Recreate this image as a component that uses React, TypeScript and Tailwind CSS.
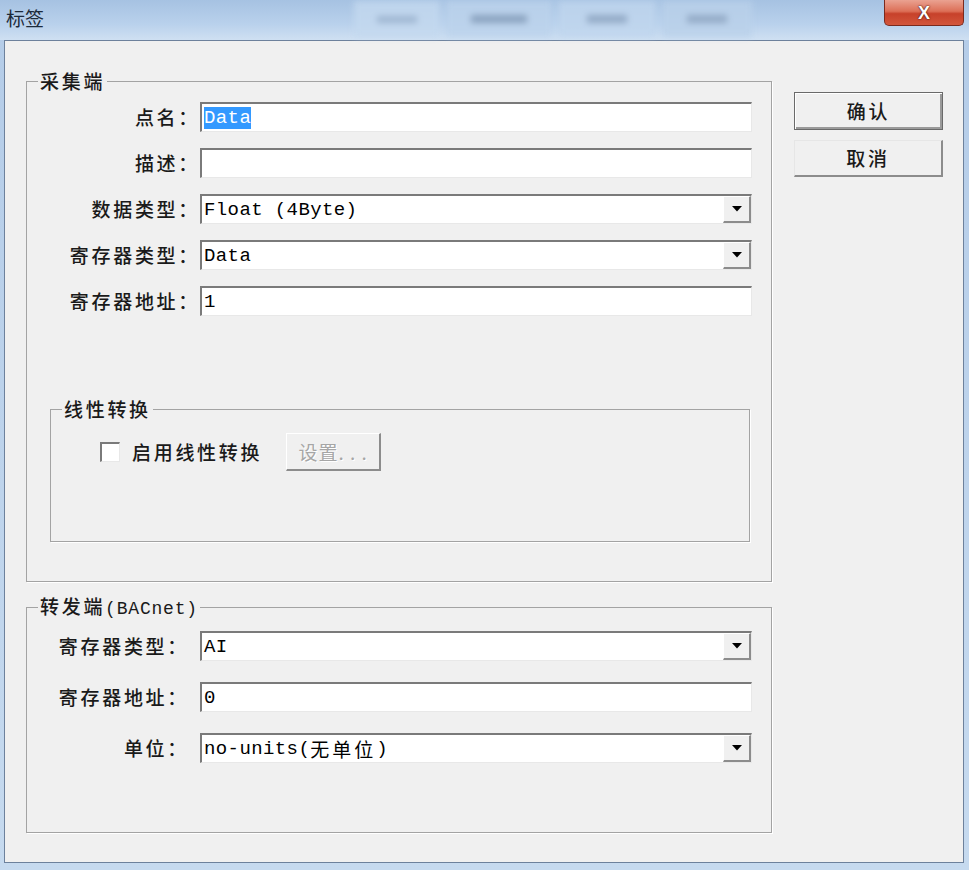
import React from "react";

const labelCls =
  "text-[19px] leading-[22px] tracking-[2.7px] font-medium text-[#1a1a1a] font-['Noto_Sans_CJK_SC',sans-serif]";
const monoCls =
  "font-['Liberation_Mono','Noto_Sans_CJK_SC',monospace] text-[19px] leading-[22px] tracking-[0.4px] text-black";

function Arrow() {
  return (
    <svg width="10" height="6" viewBox="0 0 10 6">
      <polygon points="0,0 10,0 5,5.5" fill="#000" />
    </svg>
  );
}

function Box({ combo, children }: { combo?: boolean; children?: React.ReactNode }) {
  return (
    <div className="flex h-[30px] w-[552px] border-t-2 border-l-2 border-r border-b border-t-[#7a7a7a] border-l-[#7a7a7a] border-r-[#e8e8e8] border-b-[#e8e8e8] bg-white">
      <div className={"flex flex-1 items-center pl-[2px] whitespace-nowrap " + monoCls}>{children}</div>
      {combo && (
        <div className="flex w-[28px] items-center justify-center border-l border-t border-l-[#ffffff] border-t-[#ffffff] border-r-2 border-b-2 border-r-[#8c8c8c] border-b-[#8c8c8c] bg-[#f0f0f0]">
          <Arrow />
        </div>
      )}
    </div>
  );
}

function Row({
  label,
  labelW,
  gapW,
  combo,
  children,
}: {
  label: string;
  labelW: string;
  gapW: string;
  combo?: boolean;
  children?: React.ReactNode;
}) {
  return (
    <div className="flex h-[30px] items-center">
      <div className={labelW + " text-right whitespace-nowrap " + labelCls}>{label}</div>
      <div className={gapW} />
      <Box combo={combo}>{children}</Box>
    </div>
  );
}

function TitleBar() {
  return (
    <div className="flex h-[40px] items-start bg-[linear-gradient(to_bottom,#a6c2e2,#b9d1ec_60%,#cfe0f2)]">
      <div className="ml-[6px] mt-[6px] text-[19px] leading-[24px] text-[#1d2a3a] font-['Noto_Sans_CJK_SC',sans-serif]">
        标签
      </div>
      <div className="ml-[310px] mt-[1px] flex h-[36px] gap-[6px] blur-[3px] opacity-80">
        <div className="flex w-[86px] items-center justify-center bg-[#c4d9ef]">
          <div className="h-[7px] w-[40px] bg-[#9ab1cc]" />
        </div>
        <div className="flex w-[106px] items-center justify-center bg-[#bcd3ec]">
          <div className="h-[8px] w-[56px] bg-[#8199b6]" />
        </div>
        <div className="flex w-[98px] items-center justify-center bg-[#c0d6ee]">
          <div className="h-[8px] w-[40px] bg-[#8ba2be]" />
        </div>
        <div className="flex w-[90px] items-center justify-center bg-[#bad1ea]">
          <div className="h-[8px] w-[40px] bg-[#8ca3bf]" />
        </div>
      </div>
      <div className="ml-auto mr-[5px] flex h-[26px] w-[80px] items-center justify-center rounded-b-[5px] border border-t-0 border-[#7a2a1e] bg-[linear-gradient(to_bottom,#eaa291,#dc6f57_45%,#c7412a_55%,#d2563c)]">
        <span className="text-[18px] font-bold leading-none text-white [text-shadow:0_0_2px_#4a140c,0_0_1px_#4a140c] font-['Liberation_Sans',sans-serif]">
          X
        </span>
      </div>
    </div>
  );
}

export default function App() {
  return (
    <div className="flex h-[870px] w-[969px] flex-col overflow-hidden bg-[linear-gradient(to_bottom,#b4cce8,#c6daef)] font-['Noto_Sans_CJK_SC',sans-serif]">
      <TitleBar />
      <div className="flex flex-1 pl-[4px] pr-[5px] pb-[7px]">
        <div className="flex flex-1 items-start border border-[#6d819c] bg-[#f0f0f0] pl-[21px] pt-[29px]">
          <div className="flex w-[746px] flex-col">
            {/* 采集端 */}
            <fieldset className="border border-[#a3a3a3] pb-[39px] shadow-[1px_1px_0_#ffffff]">
              <legend className={"ml-[11px] px-[2px] " + labelCls + " leading-[20px]"}>采集端</legend>
              <div className="flex flex-col gap-[16px] pt-[10px]">
                <Row label="点名：" labelW="w-[173px]" gapW="w-0">
                  <span className="bg-[#3399ff] text-white">Data</span>
                </Row>
                <Row label="描述：" labelW="w-[173px]" gapW="w-0" />
                <Row label="数据类型：" labelW="w-[173px]" gapW="w-0" combo>
                  Float (4Byte)
                </Row>
                <Row label="寄存器类型：" labelW="w-[173px]" gapW="w-0" combo>
                  Data
                </Row>
                <Row label="寄存器地址：" labelW="w-[173px]" gapW="w-0">
                  1
                </Row>
              </div>
              <fieldset className="ml-[23px] mt-[82px] w-[700px] border border-[#a3a3a3] pb-[70px] shadow-[1px_1px_0_#ffffff]">
                <legend className={"ml-[11px] px-[2px] " + labelCls + " leading-[20px]"}>线性转换</legend>
                <div className="flex items-center pl-[49px] pt-[13px]">
                  <div className="h-[20px] w-[20px] border-t-2 border-l-2 border-r border-b border-t-[#7a7a7a] border-l-[#7a7a7a] border-r-[#e8e8e8] border-b-[#e8e8e8] bg-white" />
                  <div className={"ml-[12px] " + labelCls}>启用线性转换</div>
                  <div className="ml-[24px] flex h-[38px] w-[95px] items-center justify-center border-l border-t border-l-[#ffffff] border-t-[#ffffff] border-r-2 border-b-2 border-r-[#8c8c8c] border-b-[#8c8c8c] bg-[#f0f0f0]">
                    <span className="text-[19px] leading-[22px] tracking-[1px] text-[#a6a6a6] [text-shadow:1px_1px_0_#ffffff] font-['Noto_Sans_CJK_SC',sans-serif]">
                      设置. . .
                    </span>
                  </div>
                </div>
              </fieldset>
            </fieldset>

            {/* 转发端 */}
            <fieldset className="mt-[13px] border border-[#a3a3a3] pb-[69px] shadow-[1px_1px_0_#ffffff]">
              <legend className={"ml-[11px] px-[2px] " + labelCls + " leading-[20px]"}>
                转发端
                <span className="font-['Liberation_Mono',monospace] text-[18px] tracking-[0.8px]">(BACnet)</span>
              </legend>
              <div className="flex flex-col gap-[21px] pt-[11px]">
                <Row label="寄存器类型：" labelW="w-[162px]" gapW="w-[11px]" combo>
                  AI
                </Row>
                <Row label="寄存器地址：" labelW="w-[162px]" gapW="w-[11px]">
                  0
                </Row>
                <Row label="单位：" labelW="w-[162px]" gapW="w-[11px]" combo>
                  no-units(<span className="tracking-[3px] font-['Noto_Sans_CJK_SC',sans-serif] text-[19px]">无单位</span>)
                </Row>
              </div>
            </fieldset>
          </div>

          <div className="ml-[22px] mt-[22px] flex flex-col gap-[10px]">
            <div className="flex h-[38px] w-[149px] items-center justify-center border border-[#6a6a6a] bg-[#f0f0f0] shadow-[inset_1px_1px_0_#ffffff,inset_-2px_-2px_0_#9a9a9a]">
              <span className={labelCls}>确认</span>
            </div>
            <div className="flex h-[37px] w-[149px] items-center justify-center border-l border-t border-l-[#e6e6e6] border-t-[#e6e6e6] border-r-2 border-b-2 border-r-[#8c8c8c] border-b-[#8c8c8c] bg-[#f0f0f0]">
              <span className={labelCls}>取消</span>
            </div>
          </div>
        </div>
      </div>
    </div>
  );
}
